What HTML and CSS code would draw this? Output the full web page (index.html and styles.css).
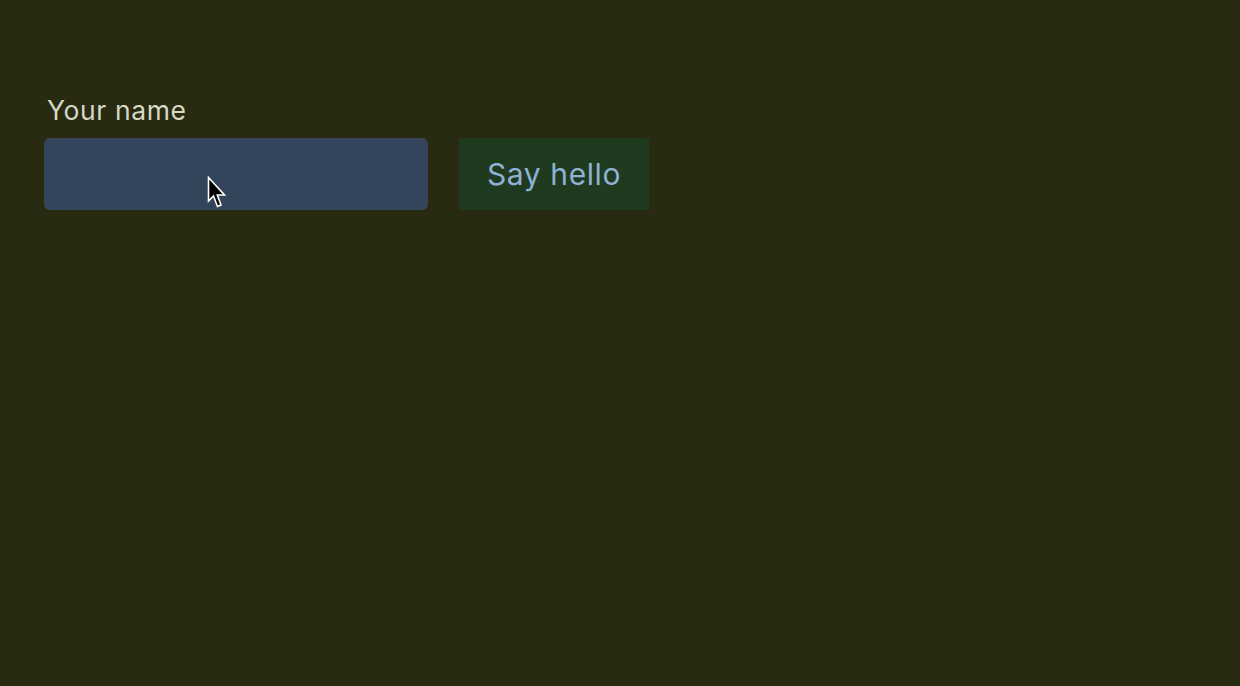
FILE: index.html
```html
<!DOCTYPE html>
<html>
<head>
<meta charset="utf-8">
<link rel="stylesheet" href="styles.css">
</head>
<body>
<div class="page">
  <label class="label" for="name">Your name</label>
  <div class="row">
    <div class="field">
      <input id="name" class="input" type="text">
      <svg class="cursor" width="20" height="34" viewBox="0 0 20 34">
        <path d="M1.5 1.5 L1.5 25 L6.5 20 L10.5 30.5 L14 29 L10.3 19 L17.5 19 Z" fill="#000" stroke="#fff" stroke-width="1.6" stroke-linejoin="miter"/>
      </svg>
    </div>
    <button class="btn" type="button">Say hello</button>
  </div>
</div>
</body>
</html>
```
FILE: styles.css
```css
html, body {
  margin: 0;
  padding: 0;
  height: 100%;
  background: #292a12;
  font-family: Inter, "Liberation Sans", Arial, sans-serif;
}
.page {
  padding: 94px 44px 0;
}
.label {
  display: block;
  color: #d6d8c2;
  font-size: 26.5px;
  line-height: 32px;
  letter-spacing: 0.6px;
  padding-left: 3px;
  margin-bottom: 12px;
}
.row {
  display: flex;
  gap: 31px;
  align-items: stretch;
}
.field {
  position: relative;
}
.input {
  display: block;
  box-sizing: border-box;
  width: 384px;
  height: 72px;
  border: none;
  border-radius: 6px;
  background: #34445a;
  outline: none;
}
.cursor {
  position: absolute;
  left: 163px;
  top: 38px;
}
.btn {
  box-sizing: border-box;
  width: 190px;
  height: 72px;
  border: none;
  border-radius: 2px;
  background: #1f3a1e;
  color: #8fb1d6;
  font-family: Inter, "Liberation Sans", Arial, sans-serif;
  font-size: 30px;
  letter-spacing: 0.6px;
  padding: 0;
}
```
